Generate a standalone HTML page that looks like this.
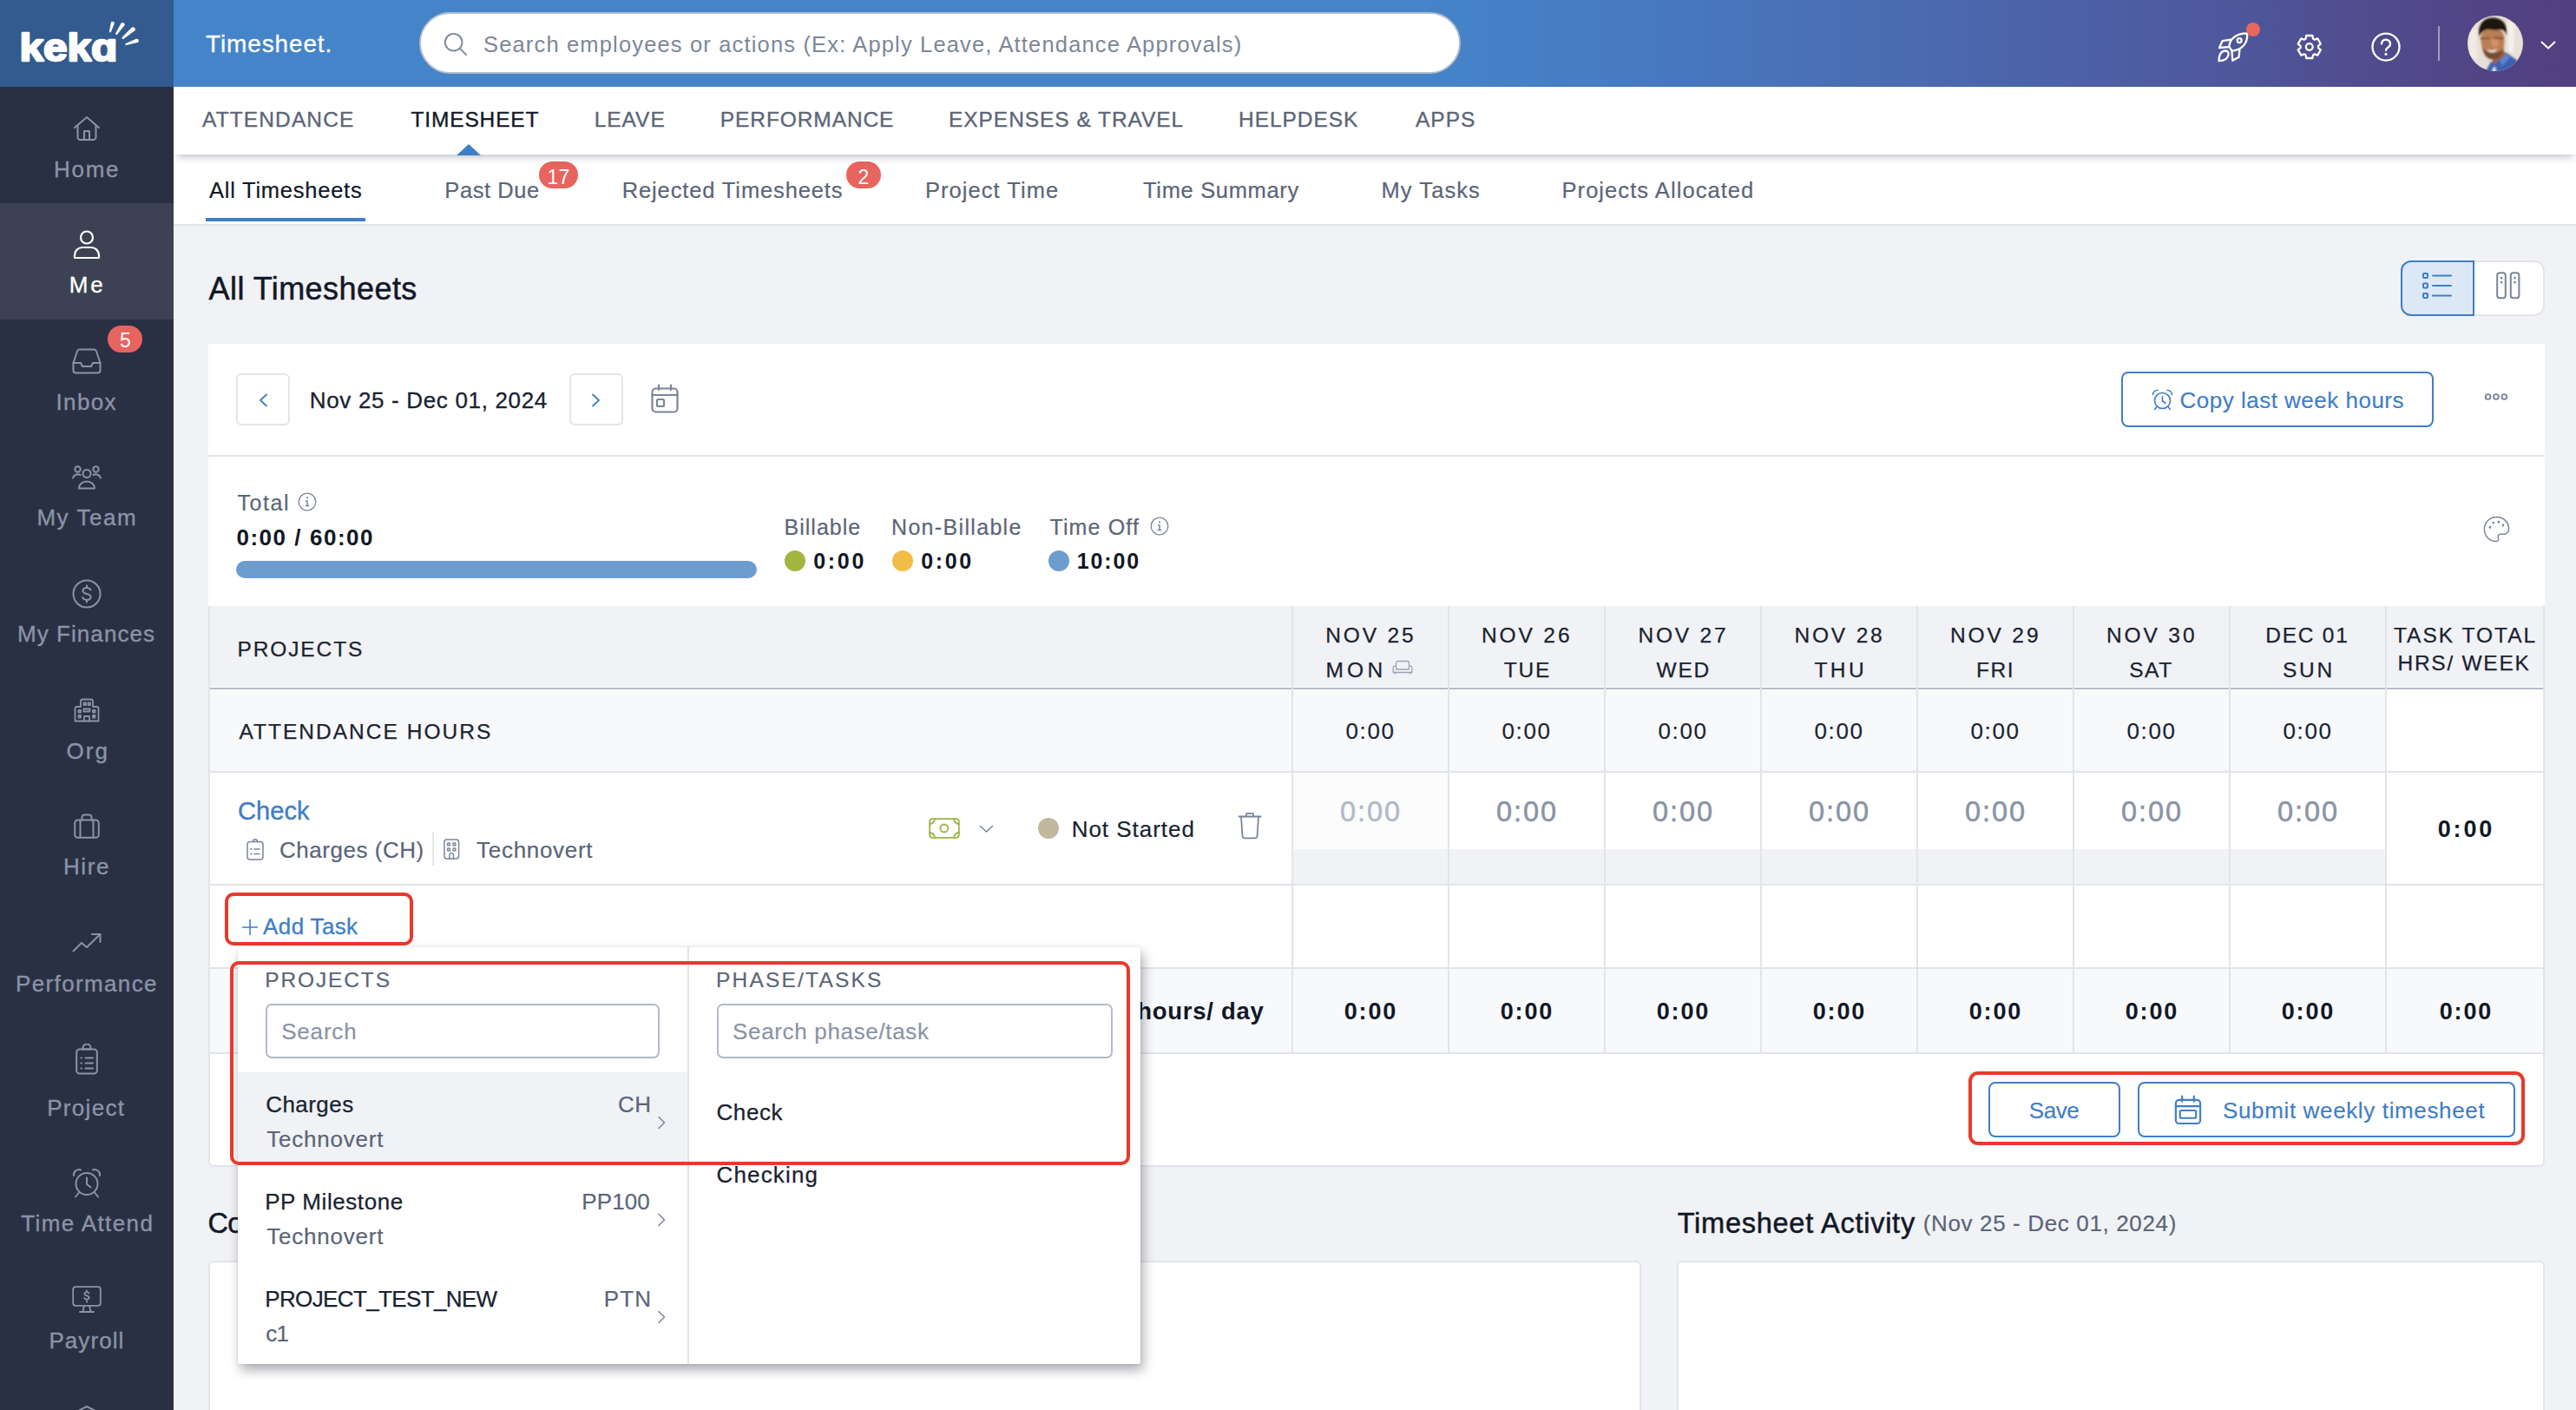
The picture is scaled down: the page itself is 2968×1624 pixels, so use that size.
<!DOCTYPE html><html lang="en"><head><meta charset="utf-8"><title>Timesheet</title><style>
html,body{margin:0;padding:0;}
body{width:2968px;height:1624px;overflow:hidden;background:#f1f2f5;font-family:"Liberation Sans",sans-serif;position:relative;}
#r div,#r span,#r svg{position:absolute;box-sizing:border-box;}
#r span{white-space:nowrap;line-height:1;}
#r{position:absolute;left:0;top:0;width:2968px;height:1624px;overflow:hidden;}
</style></head><body><div id="r">
<div style="left:200px;top:0px;width:2768px;height:100px;background:linear-gradient(90deg,#4584c9 0%,#4584c9 52%,#4779c0 62%,#4b68ae 74%,#4e589d 85%,#51498a 93%,#523f7f 100%);"></div>
<div style="left:0px;top:0px;width:200px;height:100px;background:#335b8f;"></div>
<span style="left:237.00px;top:37.00px;font-size:28px;color:#ffffff;letter-spacing:0.869px;-webkit-text-stroke:0.3px #ffffff;">Timesheet.</span>
<div style="left:483px;top:14px;width:1200px;height:71px;background:#ffffff;border-radius:36px;border:2px solid #b4bccb;"></div>
<svg style="left:511px;top:36.5px;" width="28" height="28" viewBox="0 0 30 30" fill="none" stroke="#7d8799" stroke-width="2" stroke-linecap="round" stroke-linejoin="round"><circle cx="12.5" cy="12.5" r="10.5"/><path d="M20.5 20.5 L28 28"/></svg>
<span style="left:557.00px;top:39.00px;font-size:25.5px;color:#7d8799;letter-spacing:1.161px;">Search employees or actions (Ex: Apply Leave, Attendance Approvals)</span>
<div style="left:200px;top:100px;width:2768px;height:78px;background:#ffffff;box-shadow:0 6px 9px -4px rgba(40,50,80,.34);z-index:3;"></div>
<span style="left:233.00px;top:126.00px;font-size:24.5px;color:#5b6578;letter-spacing:1.121px;-webkit-text-stroke:0.35px #5b6578;z-index:4;">ATTENDANCE</span>
<span style="left:473.50px;top:126.00px;font-size:24.5px;color:#111827;letter-spacing:0.845px;-webkit-text-stroke:0.35px #111827;z-index:4;">TIMESHEET</span>
<span style="left:684.70px;top:126.00px;font-size:24.5px;color:#5b6578;letter-spacing:0.967px;-webkit-text-stroke:0.35px #5b6578;z-index:4;">LEAVE</span>
<span style="left:829.80px;top:126.00px;font-size:24.5px;color:#5b6578;letter-spacing:0.907px;-webkit-text-stroke:0.35px #5b6578;z-index:4;">PERFORMANCE</span>
<span style="left:1093.00px;top:126.00px;font-size:24.5px;color:#5b6578;letter-spacing:0.944px;-webkit-text-stroke:0.35px #5b6578;z-index:4;">EXPENSES &amp; TRAVEL</span>
<span style="left:1427.00px;top:126.00px;font-size:24.5px;color:#5b6578;letter-spacing:0.946px;-webkit-text-stroke:0.35px #5b6578;z-index:4;">HELPDESK</span>
<span style="left:1631.00px;top:126.00px;font-size:24.5px;color:#5b6578;letter-spacing:0.992px;-webkit-text-stroke:0.35px #5b6578;z-index:4;">APPS</span>
<div style="left:526px;top:166.300px;width:0;height:0;border-left:14px solid transparent;border-right:14px solid transparent;border-bottom:13.500px solid #3f7ec6;z-index:4;"></div>
<div style="left:200px;top:178px;width:2768px;height:82px;background:#ffffff;border-bottom:2px solid #e1e4ea;"></div>
<div style="left:237px;top:251px;width:184px;height:4px;background:#3f7ec6;"></div>
<div style="left:0px;top:100px;width:200px;height:1524px;background:#2a3043;"></div>
<div style="left:0px;top:234px;width:200px;height:134px;background:#3c4253;"></div>
<span style="left:241.00px;top:207.00px;font-size:25.5px;color:#111827;letter-spacing:0.760px;-webkit-text-stroke:0.2px #111827;">All Timesheets</span>
<span style="left:512.30px;top:207.00px;font-size:25.5px;color:#5b6578;letter-spacing:0.570px;-webkit-text-stroke:0.2px #5b6578;">Past Due</span>
<span style="left:716.70px;top:207.00px;font-size:25.5px;color:#5b6578;letter-spacing:0.876px;-webkit-text-stroke:0.2px #5b6578;">Rejected Timesheets</span>
<span style="left:1066.00px;top:207.00px;font-size:25.5px;color:#5b6578;letter-spacing:1.047px;-webkit-text-stroke:0.2px #5b6578;">Project Time</span>
<span style="left:1317.00px;top:207.00px;font-size:25.5px;color:#5b6578;letter-spacing:0.668px;-webkit-text-stroke:0.2px #5b6578;">Time Summary</span>
<span style="left:1591.50px;top:207.00px;font-size:25.5px;color:#5b6578;letter-spacing:1.070px;-webkit-text-stroke:0.2px #5b6578;">My Tasks</span>
<span style="left:1799.50px;top:207.00px;font-size:25.5px;color:#5b6578;letter-spacing:1.064px;-webkit-text-stroke:0.2px #5b6578;">Projects Allocated</span>
<div style="left:621px;top:186px;width:45px;height:31px;background:#e8645f;border-radius:15.5px;"></div>
<span style="left:630.60px;top:193.00px;font-size:23px;color:#ffffff;">17</span>
<div style="left:975px;top:186px;width:40px;height:31px;background:#e8645f;border-radius:15.5px;"></div>
<span style="left:988.50px;top:193.00px;font-size:23px;color:#ffffff;">2</span>
<span style="left:62.00px;top:182.00px;font-size:26px;color:#8b93a7;letter-spacing:1.702px;-webkit-text-stroke:0.35px #8b93a7;">Home</span>
<span style="left:79.85px;top:315.00px;font-size:26px;color:#ffffff;letter-spacing:2.642px;-webkit-text-stroke:0.35px #ffffff;">Me</span>
<span style="left:64.50px;top:450.00px;font-size:26px;color:#8b93a7;letter-spacing:1.349px;-webkit-text-stroke:0.35px #8b93a7;">Inbox</span>
<span style="left:42.40px;top:583.00px;font-size:26px;color:#8b93a7;letter-spacing:1.566px;-webkit-text-stroke:0.35px #8b93a7;">My Team</span>
<span style="left:20.00px;top:717.00px;font-size:26px;color:#8b93a7;letter-spacing:1.062px;-webkit-text-stroke:0.35px #8b93a7;">My Finances</span>
<span style="left:76.60px;top:852.00px;font-size:26px;color:#8b93a7;letter-spacing:1.959px;-webkit-text-stroke:0.35px #8b93a7;">Org</span>
<span style="left:73.00px;top:985.00px;font-size:26px;color:#8b93a7;letter-spacing:1.596px;-webkit-text-stroke:0.35px #8b93a7;">Hire</span>
<span style="left:18.00px;top:1120.00px;font-size:26px;color:#8b93a7;letter-spacing:1.362px;-webkit-text-stroke:0.35px #8b93a7;">Performance</span>
<span style="left:54.20px;top:1263.00px;font-size:26px;color:#8b93a7;letter-spacing:1.317px;-webkit-text-stroke:0.35px #8b93a7;">Project</span>
<span style="left:24.15px;top:1396.00px;font-size:26px;color:#8b93a7;letter-spacing:1.396px;-webkit-text-stroke:0.35px #8b93a7;">Time Attend</span>
<span style="left:56.40px;top:1531.00px;font-size:26px;color:#8b93a7;letter-spacing:1.084px;-webkit-text-stroke:0.35px #8b93a7;">Payroll</span>
<div style="left:124px;top:374.5px;width:40px;height:31px;background:#e8645f;border-radius:15.5px;"></div>
<span style="left:138.00px;top:381.00px;font-size:23px;color:#ffffff;">5</span>
<svg style="left:84px;top:133px;" width="32" height="30" viewBox="0 0 32 30" fill="none" stroke="#8b93a7" stroke-width="2" stroke-linecap="round" stroke-linejoin="round"><path d="M2 14 L16 2 L30 14"/><path d="M5.5 12 V25 a3 3 0 0 0 3 3 H23.5 a3 3 0 0 0 3 -3 V12"/><path d="M13 28 V18 H19 V28"/></svg>
<svg style="left:84px;top:265px;" width="32" height="34" viewBox="0 0 32 34" fill="none" stroke="#ffffff" stroke-width="2.2" stroke-linecap="round" stroke-linejoin="round"><circle cx="16" cy="8.5" r="7"/><path d="M2 32 v-3 a9 9 0 0 1 9 -9 h10 a9 9 0 0 1 9 9 v3 z"/></svg>
<svg style="left:83px;top:401px;" width="34" height="30" viewBox="0 0 34 30" fill="none" stroke="#8b93a7" stroke-width="2" stroke-linecap="round" stroke-linejoin="round"><path d="M1.5 17 L6 3.5 a3 3 0 0 1 2.8 -2 H25.2 a3 3 0 0 1 2.8 2 L32.5 17 V25.5 a3 3 0 0 1 -3 3 H4.5 a3 3 0 0 1 -3 -3 z"/><path d="M1.5 17 H10 l2 4 H22 l2 -4 H32.5"/></svg>
<svg style="left:83px;top:536px;" width="34" height="28" viewBox="0 0 34 28" fill="none" stroke="#8b93a7" stroke-width="2" stroke-linecap="round" stroke-linejoin="round"><circle cx="17" cy="9.5" r="4.5"/><path d="M8 26.5 a9 8 0 0 1 18 0 z"/><circle cx="6.5" cy="4.5" r="3.2"/><circle cx="27.5" cy="4.5" r="3.2"/><path d="M1 14.5 a6 6 0 0 1 8.5 -3.5"/><path d="M33 14.5 a6 6 0 0 0 -8.5 -3.5"/></svg>
<svg style="left:83px;top:667px;" width="34" height="34" viewBox="0 0 34 34" fill="none" stroke="#8b93a7" stroke-width="2" stroke-linecap="round" stroke-linejoin="round"><circle cx="17" cy="17" r="15.5"/><path d="M21.5 12.5 c-1 -2 -3 -2.5 -4.5 -2.5 c-2.5 0 -4.5 1.3 -4.500 3.500 c0 2.200 2 3 4.500 3.500 s4.500 1.300 4.500 3.500 c0 2.200 -2 3.500 -4.500 3.500 c-2 0 -4 -0.800 -4.800 -2.800 M17 7.500 V10 M17 24 V26.5"/></svg>
<svg style="left:85px;top:804px;" width="30" height="28" viewBox="0 0 30 28" fill="none" stroke="#8b93a7" stroke-width="1.8" stroke-linecap="round" stroke-linejoin="round"><path d="M1.5 26.5 V12 a2 2 0 0 1 2 -2 H8 V4 a2.500 2.500 0 0 1 2.500 -2.500 H19.500 a2.500 2.500 0 0 1 2.500 2.500 V10 H26.500 a2 2 0 0 1 2 2 V26.500 z"/><path d="M12 26.500 V21 h6 v5.500"/><rect x="11.500" y="5.500" width="2.500" height="2.500"/><rect x="16.500" y="5.500" width="2.500" height="2.500"/><rect x="5.500" y="14" width="2.500" height="2.500"/><rect x="11.500" y="12.500" width="7" height="3"/><rect x="22" y="14" width="2.500" height="2.500"/><rect x="5.500" y="20" width="2.500" height="2.500"/><rect x="22" y="20" width="2.500" height="2.500"/></svg>
<svg style="left:85px;top:937px;" width="30" height="29" viewBox="0 0 30 29" fill="none" stroke="#8b93a7" stroke-width="2" stroke-linecap="round" stroke-linejoin="round"><rect x="1.200" y="7.500" width="27.600" height="20.300" rx="3.500"/><path d="M9.500 7.500 V4.500 a3 3 0 0 1 3 -3 h5 a3 3 0 0 1 3 3 V7.500"/><path d="M7.500 7.500 V27.500 M22.500 7.500 V27.500"/></svg>
<svg style="left:83px;top:1074px;" width="34" height="24" viewBox="0 0 34 24" fill="none" stroke="#8b93a7" stroke-width="2" stroke-linecap="round" stroke-linejoin="round"><path d="M1.500 21.500 L11 12 l6 5 L32 2.500"/><path d="M23 2 H32.500 V11"/></svg>
<svg style="left:87px;top:1202px;" width="26" height="36" viewBox="0 0 26 36" fill="none" stroke="#8b93a7" stroke-width="2" stroke-linecap="round" stroke-linejoin="round"><rect x="1.200" y="6.500" width="23.600" height="28" rx="3.500"/><path d="M8.500 6.500 V5 a4.500 4.500 0 0 1 9 0 V6.500 z"/><path d="M11.500 16.500 H20 M11.500 22.500 H20 M11.500 28.500 H20"/><path d="M6.500 16.500 h0.500 M6.500 22.500 h0.500 M6.500 28.500 h0.500"/></svg>
<svg style="left:83px;top:1345px;" width="34" height="36" viewBox="0 0 34 36" fill="none" stroke="#8b93a7" stroke-width="2" stroke-linecap="round" stroke-linejoin="round"><circle cx="17" cy="18.500" r="12.500"/><path d="M17 11.500 V19 l4.500 3.500"/><path d="M2 9 a6 6 0 0 1 8 -6.500"/><path d="M32 9 a6 6 0 0 0 -8 -6.500"/><path d="M8 28.500 L4 33.500 M26 28.500 L30 33.500"/></svg>
<svg style="left:83px;top:1481px;" width="34" height="32" viewBox="0 0 34 32" fill="none" stroke="#8b93a7" stroke-width="1.8" stroke-linecap="round" stroke-linejoin="round"><rect x="1.200" y="1.200" width="31.600" height="21.600" rx="3"/><path d="M14 22.800 L12.500 29.500 M20 22.800 L21.500 29.500 M9 30 H25"/><path d="M19.500 8.500 c-0.500 -1 -1.500 -1.300 -2.500 -1.300 c-1.500 0 -2.600 0.800 -2.600 2 c0 1.400 1.200 1.800 2.600 2.200 s2.600 0.900 2.600 2.200 c0 1.300 -1.200 2.100 -2.600 2.100 c-1.200 0 -2.300 -0.500 -2.800 -1.600 M17 5.500 V7 M17 17.300 V18.800"/></svg>
<svg style="left:84px;top:1617.5px;" width="32" height="20" viewBox="0 0 32 20" fill="none" stroke="#8b93a7" stroke-width="2" stroke-linecap="round" stroke-linejoin="round"><path d="M2 9 L16 2 L30 9"/></svg>
<svg style="left:2555px;top:36px;" width="37" height="37" viewBox="0 0 37 37" fill="none" stroke="#ffffff" stroke-width="2.3" stroke-linecap="round" stroke-linejoin="round"><path d="M13.300 17.800 C14 8.500 22 2.200 34.200 2.300 C35 14 28 21.600 16.600 22.600"/><circle cx="25.200" cy="10.600" r="2.500"/><path d="M15 9.700 L5.600 11.200 L2 19 L12.600 18.200"/><path d="M16.500 22.500 L17.300 33.800 L24.600 29.800 L25.400 21.300"/><path d="M1.600 34.200 C1.600 26 5 22.500 9 22.500 C11.500 22.500 12.800 24 12.600 26.500 C12.300 31 8 34 1.600 34.200 z"/><path d="M13.300 17.800 L16.600 22.600"/></svg>
<div style="left:2588.1px;top:25.8px;width:16.2px;height:16.2px;background:#ea675f;border-radius:50%;"></div>
<svg style="left:2645px;top:38px;" width="32" height="32" viewBox="0 0 32 32" fill="none" stroke="#ffffff" stroke-width="2.3" stroke-linecap="round" stroke-linejoin="round"><path d="M11.60 6.60 L12.20 2.99 L19.40 2.99 L20.00 6.60 L21.84 7.66 L25.27 6.38 L28.87 12.61 L26.04 14.93 L26.04 17.07 L28.87 19.39 L25.27 25.62 L21.84 24.34 L20.00 25.40 L19.40 29.01 L12.20 29.01 L11.60 25.40 L9.76 24.34 L6.33 25.62 L2.73 19.39 L5.56 17.07 L5.56 14.93 L2.73 12.61 L6.33 6.38 L9.76 7.66 z"/><circle cx="15.800" cy="16" r="3.900"/></svg>
<svg style="left:2731px;top:36px;" width="36" height="36" viewBox="0 0 36 36" fill="none" stroke="#ffffff" stroke-width="2.3" stroke-linecap="round" stroke-linejoin="round"><circle cx="18" cy="18.100" r="15.500"/><path d="M13 14.500 a5 4.800 0 1 1 7.600 4 c-1.700 1 -2.500 1.700 -2.500 3.600"/><path d="M18 26.300 v0.300" stroke-width="3"/></svg>
<div style="left:2809px;top:30px;width:2px;height:40px;background:rgba(255,255,255,.45);"></div>
<svg style="left:2927px;top:47px;" width="18" height="10" viewBox="0 0 18 10" fill="none" stroke="#ffffff" stroke-width="2" stroke-linecap="round" stroke-linejoin="round"><path d="M1.500 1.500 L9 8.500 L16.500 1.500"/></svg>
<span style="left:240.50px;top:315.00px;font-size:36px;color:#111827;letter-spacing:0.443px;-webkit-text-stroke:0.5px #111827;">All Timesheets</span>
<div style="left:2850px;top:300px;width:82px;height:64px;background:#ffffff;border:2px solid #e3e5ea;border-left:none;border-radius:0 12px 12px 0;"></div>
<div style="left:2766px;top:300px;width:85px;height:64px;background:#dce8f6;border:2px solid #3f7ec6;border-radius:12px 0 0 12px;"></div>
<svg style="left:2790px;top:313px;" width="36" height="32" viewBox="0 0 36 32" fill="none" stroke="#3f7ec6" stroke-width="2" stroke-linecap="round" stroke-linejoin="round"><rect x="2" y="2" width="5" height="5" rx="1"/><rect x="2" y="13.500" width="5" height="5" rx="1"/><rect x="2" y="25" width="5" height="5" rx="1"/><path d="M13 4.500 H34 M13 16 H34 M13 27.500 H34"/></svg>
<svg style="left:2876px;top:313px;" width="28" height="32" viewBox="0 0 28 32" fill="none" stroke="#7b8598" stroke-width="2" stroke-linecap="round" stroke-linejoin="round"><rect x="1.200" y="1.200" width="9.600" height="29" rx="3"/><rect x="16.800" y="1.200" width="9.600" height="29" rx="3"/><path d="M6 7 v0.300 M6 12 v0.300 M21.600 7 v0.300 M21.600 12 v0.300" stroke-width="2.600"/></svg>
<div style="left:240px;top:396px;width:2692px;height:948px;background:#ffffff;border-radius:0 0 6px 6px;"></div>
<div style="left:240px;top:1213px;width:2692px;height:131px;background:#ffffff;border:2px solid #e3e5ea;border-top:none;border-radius:0 0 6px 6px;"></div>
<div style="left:272px;top:430px;width:62px;height:60px;background:#ffffff;border:2px solid #e3e5ea;border-radius:6px;"></div>
<div style="left:655.5px;top:430px;width:62px;height:60px;background:#ffffff;border:2px solid #e3e5ea;border-radius:6px;"></div>
<svg style="left:297px;top:453px;" width="12" height="16" viewBox="0 0 12 16" fill="none" stroke="#3f7ec6" stroke-width="1.8" stroke-linecap="round" stroke-linejoin="round"><path d="M10 1.500 L3 8 L10 14.500"/></svg>
<svg style="left:680.5px;top:453px;" width="12" height="16" viewBox="0 0 12 16" fill="none" stroke="#3f7ec6" stroke-width="1.8" stroke-linecap="round" stroke-linejoin="round"><path d="M2 1.500 L9 8 L2 14.500"/></svg>
<span style="left:356.80px;top:448.00px;font-size:26px;color:#1a2231;letter-spacing:0.665px;-webkit-text-stroke:0.3px #1a2231;">Nov 25 - Dec 01, 2024</span>
<svg style="left:750px;top:442px;" width="32" height="34" viewBox="0 0 32 34" fill="none" stroke="#7b8598" stroke-width="2.2" stroke-linecap="round" stroke-linejoin="round"><rect x="1.500" y="5.500" width="29" height="27" rx="4"/><path d="M1.500 13 H30.500 M9 1.500 V7 M23 1.500 V7"/><rect x="7" y="18" width="8" height="8" rx="1.500"/></svg>
<div style="left:2444px;top:428px;width:360px;height:64px;background:#ffffff;border:2px solid #3f7ec6;border-radius:8px;"></div>
<svg style="left:2479px;top:448px;" width="25" height="25" viewBox="0 0 25 25" fill="none" stroke="#3f7ec6" stroke-width="1.6" stroke-linecap="round" stroke-linejoin="round"><circle cx="12.500" cy="13.500" r="9"/><path d="M12.500 8.500 V14 l3.500 2.500"/><path d="M1.500 6.500 a5 5 0 0 1 5.500 -5"/><path d="M23.500 6.500 a5 5 0 0 0 -5.500 -5"/><path d="M6 20.500 L3.500 23.500 M19 20.500 L21.500 23.500"/></svg>
<span style="left:2511.50px;top:448.00px;font-size:26px;color:#3f7ec6;letter-spacing:0.497px;-webkit-text-stroke:0.15px #3f7ec6;">Copy last week hours</span>
<svg style="left:2861px;top:451px;" width="30" height="12" viewBox="0 0 30 12" fill="none" stroke="#7b8598" stroke-width="1.9" stroke-linecap="round" stroke-linejoin="round"><circle cx="5.600" cy="6" r="2.900"/><circle cx="15" cy="6" r="2.900"/><circle cx="24.400" cy="6" r="2.900"/></svg>
<div style="left:240px;top:524px;width:2692px;height:2px;background:#e3e5ea;"></div>
<span style="left:273.40px;top:567.00px;font-size:25px;color:#5b6578;letter-spacing:1.562px;-webkit-text-stroke:0.2px #5b6578;">Total</span>
<svg style="left:343px;top:567px;" width="22" height="22" viewBox="0 0 22 22" fill="none" stroke="#7b8598" stroke-width="1.3" stroke-linecap="round" stroke-linejoin="round"><circle cx="11" cy="11" r="9.800"/><path d="M11 10 V15.500 M9.500 10 H11 M9.300 15.500 H12.700" stroke-width="1.500"/><path d="M11 6.300 v0.200" stroke-width="2"/></svg>
<span style="left:272.40px;top:606.00px;font-size:26px;color:#111827;font-weight:700;letter-spacing:1.541px;">0:00 / 60:00</span>
<div style="left:272px;top:646px;width:600px;height:20px;background:#6d9ccf;border-radius:10px;"></div>
<span style="left:903.50px;top:595.00px;font-size:25px;color:#5b6578;letter-spacing:1.014px;-webkit-text-stroke:0.2px #5b6578;">Billable</span>
<div style="left:904px;top:634px;width:24px;height:24px;background:#a1b541;border-radius:50%;"></div>
<span style="left:937.20px;top:634.00px;font-size:25px;color:#111827;font-weight:700;letter-spacing:2.722px;">0:00</span>
<span style="left:1027.00px;top:595.00px;font-size:25px;color:#5b6578;letter-spacing:1.329px;-webkit-text-stroke:0.2px #5b6578;">Non-Billable</span>
<div style="left:1028px;top:634px;width:24px;height:24px;background:#f2bd47;border-radius:50%;"></div>
<span style="left:1061.20px;top:634.00px;font-size:25px;color:#111827;font-weight:700;letter-spacing:2.622px;">0:00</span>
<span style="left:1209.40px;top:595.00px;font-size:25px;color:#5b6578;letter-spacing:1.155px;-webkit-text-stroke:0.2px #5b6578;">Time Off</span>
<svg style="left:1324.5px;top:594.5px;" width="22" height="22" viewBox="0 0 22 22" fill="none" stroke="#7b8598" stroke-width="1.3" stroke-linecap="round" stroke-linejoin="round"><circle cx="11" cy="11" r="9.800"/><path d="M11 10 V15.500 M9.500 10 H11 M9.300 15.500 H12.700" stroke-width="1.500"/><path d="M11 6.300 v0.200" stroke-width="2"/></svg>
<div style="left:1208px;top:634px;width:24px;height:24px;background:#6d9ccf;border-radius:50%;"></div>
<span style="left:1240.80px;top:634.00px;font-size:25px;color:#111827;font-weight:700;letter-spacing:1.841px;">10:00</span>
<svg style="left:2861px;top:594px;" width="31" height="31" viewBox="0 0 33 33" fill="none" stroke="#7b8598" stroke-width="1.6" stroke-linecap="round" stroke-linejoin="round"><path d="M16.500 1.500 C8 1.500 1.500 8 1.500 16.500 C1.500 24.500 7.500 31.500 15.500 31.500 C18.500 31.500 19.500 29.500 18.500 27.500 C17.500 25 18.500 22.500 21.500 22.500 H25.500 C29 22.500 31.500 20 31.500 16 C31.500 8 25 1.500 16.500 1.500 z"/><path d="M8.500 14 v0.300 M12.500 8.500 v0.300 M19 7.500 v0.300 M24.500 11.500 v0.300" stroke-width="2.800"/></svg>
<div style="left:240px;top:698px;width:2692px;height:93px;background:#f1f2f5;"></div>
<div style="left:240px;top:794px;width:2509px;height:94px;background:#f8f9fb;"></div>
<div style="left:1490px;top:889px;width:179px;height:89px;background:#fcfcfd;"></div>
<div style="left:1490px;top:978px;width:1259px;height:40px;background:#f1f2f5;"></div>
<div style="left:240px;top:1115px;width:2692px;height:97px;background:#f8f9fb;"></div>
<div style="left:240px;top:792px;width:2692px;height:2px;background:#b5bcc9;"></div>
<div style="left:240px;top:888px;width:2692px;height:2px;background:#e2e4ea;"></div>
<div style="left:240px;top:1018px;width:2692px;height:2px;background:#e2e4ea;"></div>
<div style="left:240px;top:1113.5px;width:2692px;height:2px;background:#e2e4ea;"></div>
<div style="left:240px;top:1211.5px;width:2692px;height:2px;background:#e2e4ea;"></div>
<div style="left:1488px;top:698px;width:2px;height:514px;background:#e2e4ea;"></div>
<div style="left:1668px;top:698px;width:2px;height:514px;background:#e2e4ea;"></div>
<div style="left:1848px;top:698px;width:2px;height:514px;background:#e2e4ea;"></div>
<div style="left:2028px;top:698px;width:2px;height:514px;background:#e2e4ea;"></div>
<div style="left:2208px;top:698px;width:2px;height:514px;background:#e2e4ea;"></div>
<div style="left:2388px;top:698px;width:2px;height:514px;background:#e2e4ea;"></div>
<div style="left:2568px;top:698px;width:2px;height:514px;background:#e2e4ea;"></div>
<div style="left:2748px;top:698px;width:2px;height:514px;background:#e2e4ea;"></div>
<div style="left:240px;top:698px;width:2px;height:514px;background:#e2e4ea;"></div>
<div style="left:2930px;top:698px;width:2px;height:514px;background:#e2e4ea;"></div>
<span style="left:273.50px;top:736.00px;font-size:24.5px;color:#1a2231;letter-spacing:1.880px;-webkit-text-stroke:0.25px #1a2231;">PROJECTS</span>
<span style="left:1527.30px;top:720.00px;font-size:24.5px;color:#1a2231;letter-spacing:2.835px;-webkit-text-stroke:0.25px #1a2231;">NOV 25</span>
<span style="left:1527.40px;top:760.00px;font-size:24.5px;color:#1a2231;letter-spacing:4.267px;-webkit-text-stroke:0.25px #1a2231;">MON</span>
<span style="left:1706.90px;top:720.00px;font-size:24.5px;color:#1a2231;letter-spacing:2.895px;-webkit-text-stroke:0.25px #1a2231;">NOV 26</span>
<span style="left:1732.80px;top:760.00px;font-size:24.5px;color:#1a2231;letter-spacing:1.821px;-webkit-text-stroke:0.25px #1a2231;">TUE</span>
<span style="left:1887.40px;top:720.00px;font-size:24.5px;color:#1a2231;letter-spacing:2.795px;-webkit-text-stroke:0.25px #1a2231;">NOV 27</span>
<span style="left:1908.60px;top:760.00px;font-size:24.5px;color:#1a2231;letter-spacing:1.667px;-webkit-text-stroke:0.25px #1a2231;">WED</span>
<span style="left:2067.40px;top:720.00px;font-size:24.5px;color:#1a2231;letter-spacing:2.835px;-webkit-text-stroke:0.25px #1a2231;">NOV 28</span>
<span style="left:2090.50px;top:760.00px;font-size:24.5px;color:#1a2231;letter-spacing:3.371px;-webkit-text-stroke:0.25px #1a2231;">THU</span>
<span style="left:2246.90px;top:720.00px;font-size:24.5px;color:#1a2231;letter-spacing:2.895px;-webkit-text-stroke:0.25px #1a2231;">NOV 29</span>
<span style="left:2277.00px;top:760.00px;font-size:24.5px;color:#1a2231;letter-spacing:1.571px;-webkit-text-stroke:0.25px #1a2231;">FRI</span>
<span style="left:2426.90px;top:720.00px;font-size:24.5px;color:#1a2231;letter-spacing:2.895px;-webkit-text-stroke:0.25px #1a2231;">NOV 30</span>
<span style="left:2453.20px;top:760.00px;font-size:24.5px;color:#1a2231;letter-spacing:1.568px;-webkit-text-stroke:0.25px #1a2231;">SAT</span>
<span style="left:2610.20px;top:720.00px;font-size:24.5px;color:#1a2231;letter-spacing:1.768px;-webkit-text-stroke:0.25px #1a2231;">DEC 01</span>
<span style="left:2629.90px;top:760.00px;font-size:24.5px;color:#1a2231;letter-spacing:2.783px;-webkit-text-stroke:0.25px #1a2231;">SUN</span>
<svg style="left:1603.5px;top:760px;" width="24" height="17" viewBox="0 0 24 17" fill="none" stroke="#9aa2b3" stroke-width="1.3" stroke-linecap="round" stroke-linejoin="round"><path d="M4.500 7 V4 a2.500 2.500 0 0 1 2.500 -2.500 H17 a2.500 2.500 0 0 1 2.500 2.500 V7"/><path d="M1.200 9 a1.800 1.800 0 0 1 3.600 0 V11 H19.200 V9 a1.800 1.800 0 0 1 3.600 0 V14.500 H1.200 z"/><path d="M3.500 14.500 V16 M20.500 14.500 V16"/></svg>
<span style="left:2757.90px;top:720.00px;font-size:24.5px;color:#1a2231;letter-spacing:2.006px;-webkit-text-stroke:0.25px #1a2231;">TASK TOTAL</span>
<span style="left:2762.50px;top:752.00px;font-size:24.5px;color:#1a2231;letter-spacing:1.731px;-webkit-text-stroke:0.25px #1a2231;">HRS/ WEEK</span>
<span style="left:275.50px;top:831.00px;font-size:24.5px;color:#1a2231;letter-spacing:2.014px;-webkit-text-stroke:0.25px #1a2231;">ATTENDANCE HOURS</span>
<span style="left:1550.60px;top:829.00px;font-size:26px;color:#1a2231;letter-spacing:1.552px;-webkit-text-stroke:0.15px #1a2231;">0:00</span>
<span style="left:1544.00px;top:919.00px;font-size:32.5px;color:#b3b9c6;letter-spacing:1.940px;-webkit-text-stroke:0.5px #b3b9c6;">0:00</span>
<span style="left:1548.75px;top:1152.00px;font-size:27px;color:#111827;font-weight:700;letter-spacing:1.826px;">0:00</span>
<span style="left:1730.60px;top:829.00px;font-size:26px;color:#1a2231;letter-spacing:1.552px;-webkit-text-stroke:0.15px #1a2231;">0:00</span>
<span style="left:1724.00px;top:919.00px;font-size:32.5px;color:#8a93a6;letter-spacing:1.940px;-webkit-text-stroke:0.5px #8a93a6;">0:00</span>
<span style="left:1728.75px;top:1152.00px;font-size:27px;color:#111827;font-weight:700;letter-spacing:1.826px;">0:00</span>
<span style="left:1910.60px;top:829.00px;font-size:26px;color:#1a2231;letter-spacing:1.552px;-webkit-text-stroke:0.15px #1a2231;">0:00</span>
<span style="left:1904.00px;top:919.00px;font-size:32.5px;color:#8a93a6;letter-spacing:1.940px;-webkit-text-stroke:0.5px #8a93a6;">0:00</span>
<span style="left:1908.75px;top:1152.00px;font-size:27px;color:#111827;font-weight:700;letter-spacing:1.826px;">0:00</span>
<span style="left:2090.60px;top:829.00px;font-size:26px;color:#1a2231;letter-spacing:1.552px;-webkit-text-stroke:0.15px #1a2231;">0:00</span>
<span style="left:2084.00px;top:919.00px;font-size:32.5px;color:#8a93a6;letter-spacing:1.940px;-webkit-text-stroke:0.5px #8a93a6;">0:00</span>
<span style="left:2088.75px;top:1152.00px;font-size:27px;color:#111827;font-weight:700;letter-spacing:1.826px;">0:00</span>
<span style="left:2270.60px;top:829.00px;font-size:26px;color:#1a2231;letter-spacing:1.552px;-webkit-text-stroke:0.15px #1a2231;">0:00</span>
<span style="left:2264.00px;top:919.00px;font-size:32.5px;color:#8a93a6;letter-spacing:1.940px;-webkit-text-stroke:0.5px #8a93a6;">0:00</span>
<span style="left:2268.75px;top:1152.00px;font-size:27px;color:#111827;font-weight:700;letter-spacing:1.826px;">0:00</span>
<span style="left:2450.60px;top:829.00px;font-size:26px;color:#1a2231;letter-spacing:1.552px;-webkit-text-stroke:0.15px #1a2231;">0:00</span>
<span style="left:2444.00px;top:919.00px;font-size:32.5px;color:#8a93a6;letter-spacing:1.940px;-webkit-text-stroke:0.5px #8a93a6;">0:00</span>
<span style="left:2448.75px;top:1152.00px;font-size:27px;color:#111827;font-weight:700;letter-spacing:1.826px;">0:00</span>
<span style="left:2630.60px;top:829.00px;font-size:26px;color:#1a2231;letter-spacing:1.552px;-webkit-text-stroke:0.15px #1a2231;">0:00</span>
<span style="left:2624.00px;top:919.00px;font-size:32.5px;color:#8a93a6;letter-spacing:1.940px;-webkit-text-stroke:0.5px #8a93a6;">0:00</span>
<span style="left:2628.75px;top:1152.00px;font-size:27px;color:#111827;font-weight:700;letter-spacing:1.826px;">0:00</span>
<span style="left:2808.80px;top:942.00px;font-size:27px;color:#111827;font-weight:700;letter-spacing:2.792px;">0:00</span>
<span style="left:2810.75px;top:1152.00px;font-size:27px;color:#111827;font-weight:700;letter-spacing:1.826px;">0:00</span>
<span style="left:1234.50px;top:1151.00px;font-size:27.5px;color:#111827;font-weight:700;letter-spacing:0.730px;">Total hours/ day</span>
<span style="left:274.00px;top:920.00px;font-size:29px;color:#3f7ec6;letter-spacing:0.075px;-webkit-text-stroke:0.4px #3f7ec6;">Check</span>
<svg style="left:284px;top:965px;" width="20" height="26" viewBox="0 0 20 26" fill="none" stroke="#7b8598" stroke-width="1.5" stroke-linecap="round" stroke-linejoin="round"><rect x="1" y="4.500" width="18" height="20.500" rx="3"/><path d="M7.500 4.500 a2.500 2.800 0 0 1 5 0"/><path d="M9 13 H15 M9 18.500 H15"/><path d="M5.300 13 h0.300 M5.300 18.500 h0.300" stroke-width="2"/></svg>
<span style="left:322.00px;top:966.00px;font-size:26px;color:#5b6578;letter-spacing:0.536px;-webkit-text-stroke:0.2px #5b6578;">Charges (CH)</span>
<div style="left:498px;top:958px;width:2px;height:39px;background:#e4e6eb;"></div>
<svg style="left:511px;top:966px;" width="18.5" height="24" viewBox="0 0 20 26" fill="none" stroke="#7b8598" stroke-width="1.6" stroke-linecap="round" stroke-linejoin="round"><rect x="1" y="1" width="18" height="24" rx="3"/><rect x="5" y="5.500" width="3" height="3" rx="0.500"/><rect x="12" y="5.500" width="3" height="3" rx="0.500"/><rect x="5" y="12" width="3" height="3" rx="0.500"/><rect x="12" y="12" width="3" height="3" rx="0.500"/><path d="M7.500 25 V20.500 a2.500 2.500 0 0 1 5 0 V25"/></svg>
<span style="left:549.10px;top:966.00px;font-size:26px;color:#5b6578;letter-spacing:0.694px;-webkit-text-stroke:0.2px #5b6578;">Technovert</span>
<svg style="left:1070px;top:942px;" width="36" height="24" viewBox="0 0 36 24" fill="none" stroke="#9bb443" stroke-width="1.8" stroke-linecap="round" stroke-linejoin="round"><rect x="1.200" y="1.200" width="33.600" height="21.600" rx="3"/><circle cx="17.800" cy="12" r="4.500"/><path d="M1.200 7 a6 6 0 0 0 5.800 -5.800 M34.800 7 a6 6 0 0 1 -5.800 -5.800 M1.200 17 a6 6 0 0 1 5.800 5.800 M34.800 17 a6 6 0 0 0 -5.800 5.800"/></svg>
<svg style="left:1128px;top:950px;" width="17" height="10" viewBox="0 0 17 10" fill="none" stroke="#7b8598" stroke-width="1.6" stroke-linecap="round" stroke-linejoin="round"><path d="M1.500 1.500 L8.500 8 L15.500 1.500"/></svg>
<div style="left:1196px;top:942px;width:24px;height:24px;background:#c2b89d;border-radius:50%;"></div>
<span style="left:1234.70px;top:942.00px;font-size:26px;color:#1a2231;letter-spacing:0.965px;-webkit-text-stroke:0.2px #1a2231;">Not Started</span>
<svg style="left:1426px;top:935px;" width="28" height="32" viewBox="0 0 28 32" fill="none" stroke="#7b8598" stroke-width="1.8" stroke-linecap="round" stroke-linejoin="round"><path d="M1.500 5.500 H26.500"/><path d="M9.500 5.500 L10.500 1.800 H17.500 L18.500 5.500"/><path d="M4 5.500 L5.500 28 a2.500 2.500 0 0 0 2.500 2.300 H20 a2.500 2.500 0 0 0 2.500 -2.300 L24 5.500"/></svg>
<span style="left:303.10px;top:1054.00px;font-size:26px;color:#3f7ec6;letter-spacing:0.365px;-webkit-text-stroke:0.3px #3f7ec6;">Add Task</span>
<svg style="left:278px;top:1058px;" width="20" height="20" viewBox="0 0 20 20" fill="none" stroke="#3f7ec6" stroke-width="1.6" stroke-linecap="round" stroke-linejoin="round"><path d="M10 1.500 V18.500 M1.500 10 H18.500"/></svg>
<div style="left:259px;top:1028px;width:217px;height:61px;background:transparent;border:4px solid #e8392b;border-radius:10px;"></div>
<div style="left:2291px;top:1246px;width:152px;height:64px;background:#ffffff;border:2px solid #3f7ec6;border-radius:8px;"></div>
<span style="left:2337.85px;top:1266.00px;font-size:26px;color:#3f7ec6;letter-spacing:-0.434px;-webkit-text-stroke:0.15px #3f7ec6;">Save</span>
<div style="left:2463px;top:1246px;width:435px;height:64px;background:#ffffff;border:2px solid #3f7ec6;border-radius:8px;"></div>
<svg style="left:2504.5px;top:1260.5px;" width="32" height="35" viewBox="0 0 32 36" fill="none" stroke="#3f7ec6" stroke-width="2.2" stroke-linecap="round" stroke-linejoin="round"><rect x="1.500" y="6" width="29" height="28" rx="4"/><path d="M1.500 13.500 H30.500 M9 1.500 V8 M23 1.500 V8"/><rect x="6.500" y="18.500" width="19" height="9" rx="1.500"/></svg>
<span style="left:2561.00px;top:1266.00px;font-size:26px;color:#3f7ec6;letter-spacing:0.639px;-webkit-text-stroke:0.15px #3f7ec6;">Submit weekly timesheet</span>
<div style="left:2268.2px;top:1233.5px;width:641.3px;height:85px;background:transparent;border:4.300px solid #e8392b;border-radius:11px;"></div>
<span style="left:239.50px;top:1393.00px;font-size:32.5px;color:#111827;letter-spacing:-0.839px;-webkit-text-stroke:0.5px #111827;">Comments</span>
<div style="left:240px;top:1452px;width:1651px;height:200px;background:#ffffff;border:2px solid #e3e5ea;border-radius:6px;"></div>
<span style="left:1932.70px;top:1393.00px;font-size:32.5px;color:#111827;letter-spacing:0.751px;-webkit-text-stroke:0.5px #111827;">Timesheet Activity</span>
<span style="left:2215.70px;top:1396.00px;font-size:26px;color:#5b6578;letter-spacing:0.645px;-webkit-text-stroke:0.2px #5b6578;">(Nov 25 - Dec 01, 2024)</span>
<div style="left:1932px;top:1452px;width:1000px;height:200px;background:#ffffff;border:2px solid #e3e5ea;border-radius:6px;"></div>
<div style="left:274px;top:1091px;width:1040px;height:480px;background:#ffffff;box-shadow:3px 7px 13px rgba(20,25,40,.36), 0 0 2px rgba(20,25,40,.12);border-radius:2px;"></div>
<div style="left:274px;top:1235px;width:519px;height:107px;background:#f1f2f5;"></div>
<div style="left:792px;top:1091px;width:2px;height:480px;background:#e2e4ea;"></div>
<span style="left:305.20px;top:1117.00px;font-size:24.5px;color:#5b6578;letter-spacing:1.880px;-webkit-text-stroke:0.2px #5b6578;">PROJECTS</span>
<span style="left:825.00px;top:1117.00px;font-size:24.5px;color:#5b6578;letter-spacing:2.196px;-webkit-text-stroke:0.2px #5b6578;">PHASE/TASKS</span>
<div style="left:306px;top:1155.5px;width:454px;height:63px;background:#ffffff;border:2px solid #b3bac8;border-radius:7px;"></div>
<div style="left:826px;top:1155.5px;width:456px;height:63px;background:#ffffff;border:2px solid #b3bac8;border-radius:7px;"></div>
<span style="left:324.20px;top:1175.00px;font-size:26px;color:#8a93a6;letter-spacing:0.816px;-webkit-text-stroke:0.15px #8a93a6;">Search</span>
<span style="left:844.00px;top:1175.00px;font-size:26px;color:#8a93a6;letter-spacing:0.666px;-webkit-text-stroke:0.15px #8a93a6;">Search phase/task</span>
<span style="left:306.20px;top:1259.00px;font-size:26px;color:#1a2231;letter-spacing:0.454px;-webkit-text-stroke:0.25px #1a2231;">Charges</span>
<span style="left:712.00px;top:1259.00px;font-size:26px;color:#5b6578;letter-spacing:0.524px;-webkit-text-stroke:0.2px #5b6578;">CH</span>
<span style="left:307.20px;top:1299.00px;font-size:26px;color:#5b6578;letter-spacing:0.782px;-webkit-text-stroke:0.2px #5b6578;">Technovert</span>
<svg style="left:757px;top:1285px;" width="11" height="16" viewBox="0 0 11 16" fill="none" stroke="#7b8598" stroke-width="1.5" stroke-linecap="round" stroke-linejoin="round"><path d="M2 1.500 L8.500 8 L2 14.500"/></svg>
<span style="left:305.20px;top:1371.00px;font-size:26px;color:#1a2231;letter-spacing:0.571px;-webkit-text-stroke:0.25px #1a2231;">PP Milestone</span>
<span style="left:670.30px;top:1371.00px;font-size:26px;color:#5b6578;letter-spacing:0.099px;-webkit-text-stroke:0.2px #5b6578;">PP100</span>
<span style="left:307.20px;top:1411.00px;font-size:26px;color:#5b6578;letter-spacing:0.782px;-webkit-text-stroke:0.2px #5b6578;">Technovert</span>
<svg style="left:757px;top:1397px;" width="11" height="16" viewBox="0 0 11 16" fill="none" stroke="#7b8598" stroke-width="1.5" stroke-linecap="round" stroke-linejoin="round"><path d="M2 1.500 L8.500 8 L2 14.500"/></svg>
<span style="left:305.20px;top:1483.00px;font-size:26px;color:#1a2231;letter-spacing:-0.628px;-webkit-text-stroke:0.25px #1a2231;">PROJECT_TEST_NEW</span>
<span style="left:695.80px;top:1483.00px;font-size:26px;color:#5b6578;letter-spacing:1.138px;-webkit-text-stroke:0.2px #5b6578;">PTN</span>
<span style="left:306.20px;top:1523.00px;font-size:26px;color:#5b6578;letter-spacing:-0.700px;-webkit-text-stroke:0.2px #5b6578;">c1</span>
<svg style="left:757px;top:1509px;" width="11" height="16" viewBox="0 0 11 16" fill="none" stroke="#7b8598" stroke-width="1.5" stroke-linecap="round" stroke-linejoin="round"><path d="M2 1.500 L8.500 8 L2 14.500"/></svg>
<span style="left:825.50px;top:1268.00px;font-size:26px;color:#1a2231;letter-spacing:0.576px;-webkit-text-stroke:0.25px #1a2231;">Check</span>
<span style="left:825.50px;top:1340.00px;font-size:26px;color:#1a2231;letter-spacing:1.152px;-webkit-text-stroke:0.25px #1a2231;">Checking</span>
<div style="left:265px;top:1107px;width:1037px;height:235px;background:transparent;border:4px solid #e8392b;border-radius:10px;"></div>
<svg style="left:0;top:0" width="200" height="100" viewBox="0 0 200 100">
<text x="22.400" y="70.300" font-family="Liberation Sans, sans-serif" font-weight="700" font-size="44.500" fill="#fff" stroke="#fff" stroke-width="2.400" stroke-linejoin="round" textLength="113" lengthAdjust="spacingAndGlyphs">kekɑ</text>
<g fill="#fff" stroke="none"><polygon points="128.06,36.60 131.62,27.35 127.78,26.25 125.94,36.00"/><circle cx="127" cy="36.3" r="1.1"/><circle cx="129.7" cy="26.8" r="2"/><polygon points="135.20,39.47 143.21,29.48 139.39,26.92 133.20,38.13"/><circle cx="134.2" cy="38.8" r="1.2"/><circle cx="141.3" cy="28.2" r="2.3"/><polygon points="142.55,44.78 154.94,35.59 151.66,31.81 140.85,42.82"/><circle cx="141.7" cy="43.8" r="1.3"/><circle cx="153.3" cy="33.7" r="2.5"/><polygon points="145.65,52.04 158.39,48.99 157.01,44.81 144.95,49.96"/><circle cx="145.3" cy="51" r="1.1"/><circle cx="157.7" cy="46.9" r="2.2"/></g></svg>
<svg style="left:2843px;top:18px" width="64" height="64" viewBox="0 0 64 64">
<defs><clipPath id="av"><circle cx="32" cy="32" r="32"/></clipPath><filter id="bl" x="-20%" y="-20%" width="140%" height="140%"><feGaussianBlur stdDeviation="1"/></filter></defs>
<g clip-path="url(#av)"><rect width="64" height="64" fill="#e8e0d8"/>
<g filter="url(#bl)">
<path d="M46 6 L54 9 L53 44 L47 40 z" fill="#f5f0ea"/>
<path d="M2 20 L10 14 L11 50 L3 48 z" fill="#f1ebe4"/>
<path d="M20 66 L26.500 54 L44.500 42.500 L57 51.500 L60 66 z" fill="#3c61b0"/>
<path d="M37 52 L44.500 44 L49 48 L40 58 z" fill="#5a83d3"/>
<path d="M28.500 66 L29.500 59.500 L32.500 59.500 L32.500 66 z" fill="#e3e9f4"/>
<path d="M29 44 L41 40 L45 44.500 L29.500 57 z" fill="#9c6443"/>
<path d="M15.500 30 C14.500 19 20 12.500 29 13 C38 13 43.500 19 42.500 31 C42 41.500 36.500 50 29.500 50 C22 50 16.500 41 15.500 30 z" fill="#bb7d53"/>
<ellipse cx="31.500" cy="31" rx="4.500" ry="6" fill="#d9a074" opacity=".6"/>
<path d="M17 36 C18.500 47 24 51 30 50.500 C36.500 50 41 44.500 42.500 35.500 C40 44 22 46 17 36 z" fill="#65402c" opacity=".8"/>
<path d="M21.500 38.500 C25 43.500 31.500 43.500 35 38 C31.500 40.500 25 41 21.500 38.500 z" fill="#f8f2ec"/>
<path d="M13.500 24 C11 11 19 2 28.500 2.500 C38 2 47 8 45.500 24 C44 18 41.500 15.500 37 16 C30 18 23 14 18.500 17.500 C15.500 19.500 15 21.500 13.500 24 z" fill="#1c1410"/>
<path d="M14 26.300 h12 M29.500 26 h12" stroke="#4a3226" stroke-width="1.300" opacity=".85"/>
</g></g></svg>
</div></body></html>
